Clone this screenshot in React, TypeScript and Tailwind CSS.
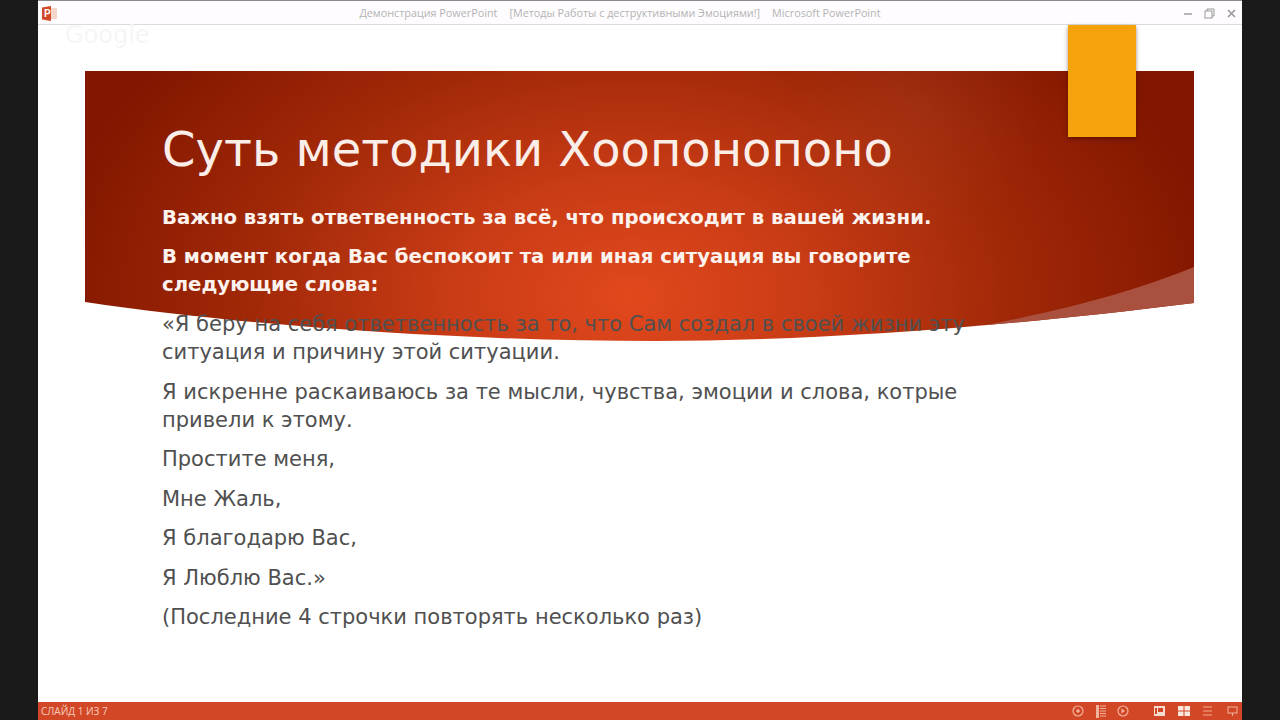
const font = "[font-family:'DejaVu_Sans',sans-serif]";
const bannerPath = "M0 0H1109V232C900 258 720 270 570 270C380 270 170 256 0 231Z";

function Banner() {
  return (
    <svg className="absolute left-[47px] top-[46px]" width="1109" height="272" viewBox="0 0 1109 272" aria-hidden="true">
      <defs>
        <radialGradient id="rg" gradientUnits="userSpaceOnUse" cx="545" cy="225" r="590" gradientTransform="translate(0 79) scale(1 0.65)">
          <stop offset="0" stopColor="#e2481c" />
          <stop offset="0.3" stopColor="#c93c16" />
          <stop offset="0.65" stopColor="#a02807" />
          <stop offset="1" stopColor="#821600" />
        </radialGradient>
        <radialGradient id="hl" gradientUnits="userSpaceOnUse" cx="830" cy="40" r="130">
          <stop offset="0" stopColor="#ffffff" stopOpacity="0.04" />
          <stop offset="1" stopColor="#ffffff" stopOpacity="0" />
        </radialGradient>
        <clipPath id="bc"><path d={bannerPath} /></clipPath>
      </defs>
      <path d={bannerPath} fill="url(#rg)" />
      <path d={bannerPath} fill="url(#hl)" />
      <path d="M1109 196C1050 220 980 240 860 262L1109 272Z" fill="#a9503e" clipPath="url(#bc)" />
    </svg>
  );
}

function WindowIcons() {
  return (
    <div className="flex items-center gap-[11px] pr-[5px] text-[#9a9a9a]">
      <svg width="10" height="10" viewBox="0 0 10 10" aria-hidden="true"><path d="M1 6H9" stroke="currentColor" strokeWidth="1.4" /></svg>
      <svg width="11" height="11" viewBox="0 0 11 11" fill="none" stroke="currentColor" aria-hidden="true"><path d="M3 3V1H10V8H8" /><rect x="1" y="3" width="7" height="7" /></svg>
      <svg width="11" height="11" viewBox="0 0 11 11" aria-hidden="true"><path d="M2 2L9 9M9 2L2 9" stroke="currentColor" strokeWidth="1.6" /></svg>
    </div>
  );
}

function PptIcon() {
  return (
    <div className="relative h-[15px] w-[15px]">
      <svg width="15" height="15" viewBox="0 0 15 15" aria-hidden="true">
        <rect x="6" y="2" width="9" height="11" fill="#f3d5c9" />
        <path d="M0 1.5L9 0V15L0 13.5Z" fill="#d24726" />
      </svg>
      <span className="absolute left-[2px] top-[1px] font-['Liberation_Sans',sans-serif] text-[10px] font-bold leading-[13px] text-white">P</span>
    </div>
  );
}

function StatusIcons() {
  const c = "#f2b39c";
  return (
    <div className="flex items-center pr-[4px]">
      <svg className="mr-[12px]" width="12" height="12" viewBox="0 0 12 12" fill="none" aria-hidden="true"><circle cx="6" cy="6" r="5" stroke={c} strokeWidth="1.2" /><circle cx="6" cy="6" r="1.8" fill={c} /></svg>
      <svg className="mr-[11px]" width="10" height="13" viewBox="0 0 10 13" aria-hidden="true"><rect width="3" height="13" fill={c} /><path d="M4 1H10M4 3.5H10M4 6H10M4 8.5H10M4 11H10" stroke={c} /></svg>
      <svg className="mr-[25px]" width="12" height="12" viewBox="0 0 12 12" fill="none" aria-hidden="true"><circle cx="6" cy="6" r="5" stroke={c} strokeWidth="1.2" /><path d="M4.5 3.5L8 6L4.5 8.5Z" fill={c} /></svg>
      <svg className="mr-[13px]" width="11" height="10" viewBox="0 0 11 10" aria-hidden="true"><rect width="11" height="10" fill="#f8dcd0" /><rect x="4" y="2" width="5" height="4" fill="#d24726" /><rect x="1" y="2" width="2" height="6" fill="#d24726" /></svg>
      <svg className="mr-[12px]" width="12" height="10" viewBox="0 0 12 10" aria-hidden="true"><rect width="5.5" height="4.5" fill="#fbe7de" /><rect x="6.5" width="5.5" height="4.5" fill="#fbe7de" /><rect y="5.5" width="5.5" height="4.5" fill="#fbe7de" /><rect x="6.5" y="5.5" width="5.5" height="4.5" fill="#fbe7de" /></svg>
      <svg className="mr-[14px]" width="11" height="10" viewBox="0 0 11 10" fill="none" aria-hidden="true"><path d="M1 1H10M1 5H10M1 9H10" stroke="#e98a6c" strokeWidth="1.4" /></svg>
      <svg width="11" height="11" viewBox="0 0 11 11" fill="none" aria-hidden="true"><rect x="1" y="1" width="9" height="6" stroke={c} /><path d="M5.5 7V10" stroke={c} /></svg>
    </div>
  );
}

export default function App() {
  const body = "text-[21px] leading-[28px] text-[#505050]";
  return (
    <div className={`flex h-[720px] w-[1280px] overflow-hidden bg-[#1a1a1a] ${font}`}>
      <div className="w-[38px] shrink-0 bg-[#1a1a1a]" />
      <div className="flex w-[1204px] shrink-0 flex-col bg-white">
        <header className="flex h-[25px] shrink-0 items-center justify-between border-t-[1px] border-b-[1px] border-t-[#8a8a8a] border-b-[#dcdcdc] bg-[#fefcfe] pl-[4px] pt-[1px]">
          <PptIcon />
          <div className="flex gap-[12px] font-['Open_Sans',sans-serif] text-[10.8px] text-[#b4b4b4]">
            <span>Демонстрация PowerPoint</span>
            <span>[Методы Работы с деструктивными Эмоциями!]</span>
            <span>Microsoft PowerPoint</span>
          </div>
          <WindowIcons />
        </header>
        <main className="relative flex-1 bg-white">
          <Banner />
          <div className="absolute left-[1030px] top-0 h-[112px] w-[68px] bg-[#f5a30d] shadow-[0_2px_4px_rgba(60,10,0,0.5)]" />
          <div className="absolute left-[27px] top-[-6px] text-[24px] leading-[32px] text-[#f6f6f6]">Google</div>
          <div className="relative flex flex-col pl-[124px] pt-[95px]">
            <h1 className="text-[48px] leading-[58px] text-[#fbeee8]">Суть методики Хоопонопоно</h1>
            <div className="mt-[26px] flex w-[800px] flex-col gap-[11px] text-[19.7px] font-bold leading-[28px] text-[#fdf3ee]">
              <p>Важно взять ответвенность за всё, что происходит в вашей жизни.</p>
              <p>В момент когда Вас беспокоит та или иная ситуация вы говорите следующие слова:</p>
            </div>
            <div className={`mt-[11px] flex w-[850px] flex-col gap-[11.5px] ${body}`}>
              <p>«Я беру на себя ответвенность за то, что Сам создал в своей жизни эту ситуация и причину этой ситуации.</p>
              <p>Я искренне раскаиваюсь за те мысли, чувства, эмоции и слова, котрые привели к этому.</p>
              <p>Простите меня,</p>
              <p>Мне Жаль,</p>
              <p>Я благодарю Вас,</p>
              <p>Я Люблю Вас.»</p>
              <p>(Последние 4 строчки повторять несколько раз)</p>
            </div>
          </div>
        </main>
        <footer className="flex h-[18px] shrink-0 items-center justify-between bg-[#d24726] pl-[3px]">
          <span className="font-['Open_Sans',sans-serif] text-[10px] text-[#f7cdbd]">СЛАЙД 1 ИЗ 7</span>
          <StatusIcons />
        </footer>
      </div>
      <div className="flex-1 bg-[#1a1a1a]" />
    </div>
  );
}
